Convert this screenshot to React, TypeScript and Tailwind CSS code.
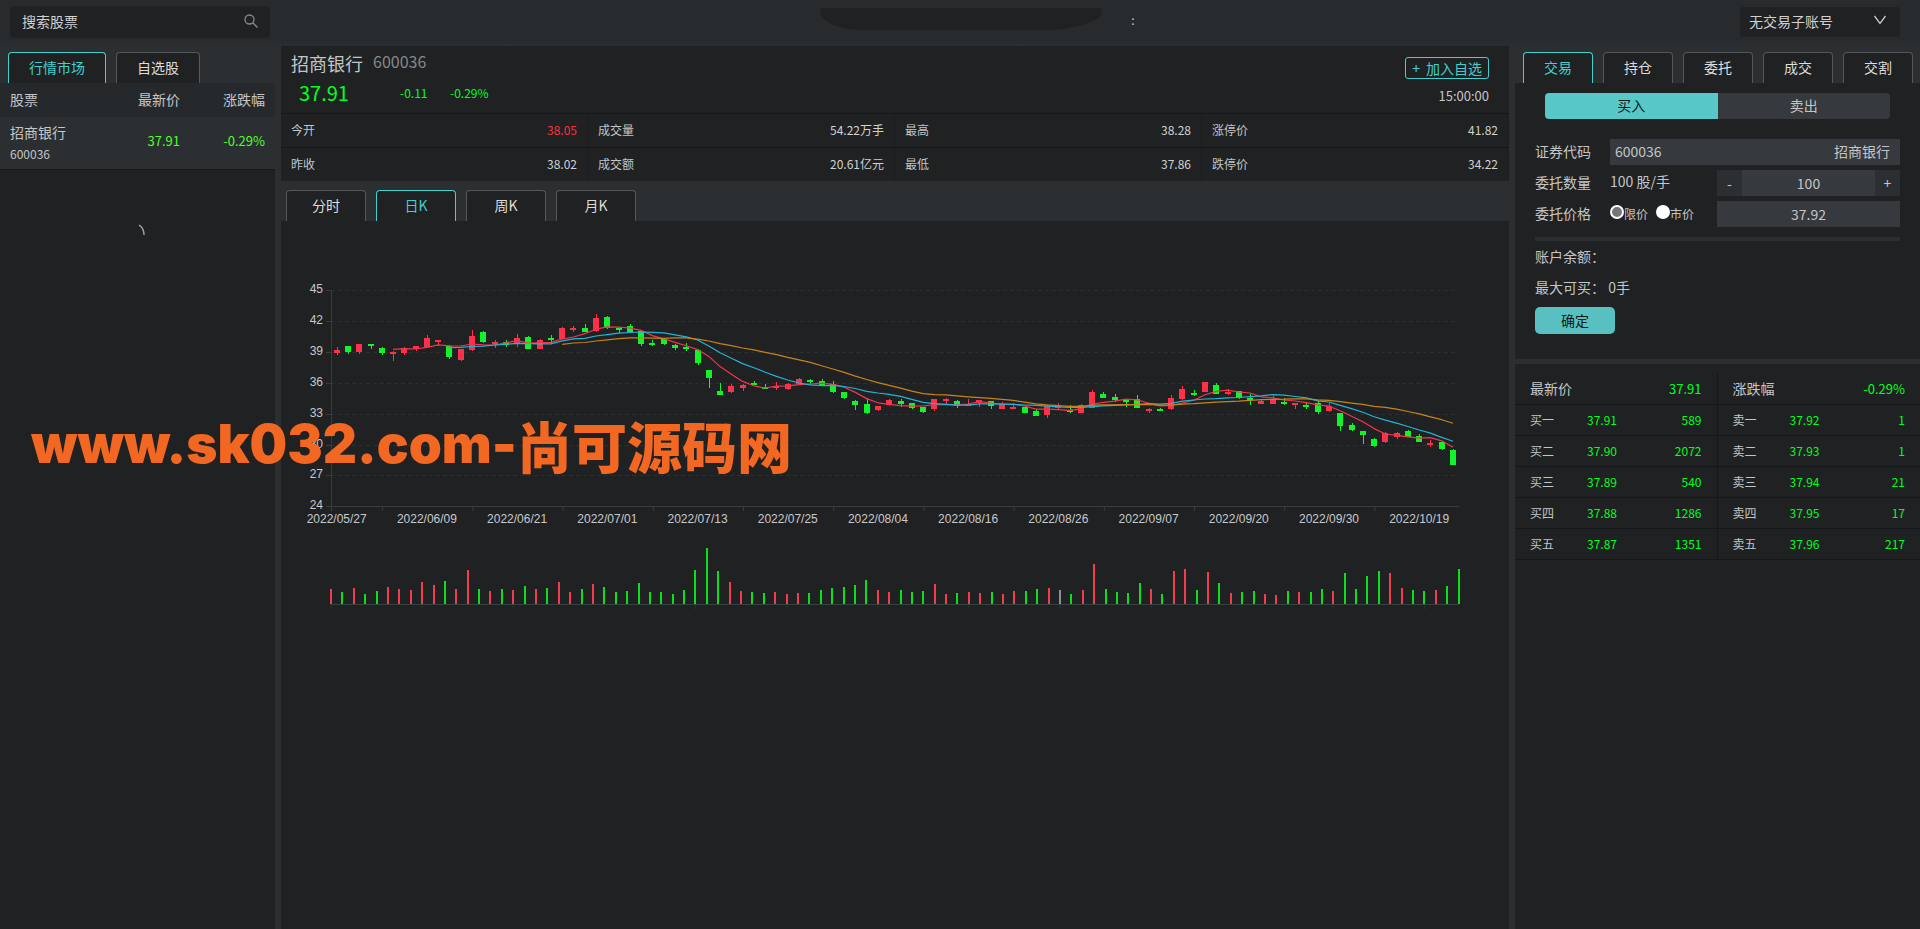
import { ReactNode, useState } from "react"
import clsx from "clsx"

type Candle = [up: number, high: number, top: number, bottom: number, low: number, volume: number]

// up flag, wick top, body top, body bottom, wick bottom, volume bar height
const candles: Candle[] = [
    [1, 87, 90, 93, 95, 15], [0, 86, 86, 92, 94, 12], [1, 84, 84, 92, 94, 16], [0, 84, 84, 86, 89, 10], [0, 87, 88, 93, 95, 13],
    [1, 91, 92, 94, 101, 17], [1, 87, 88, 93, 95, 15], [1, 86, 86, 89, 91, 14], [1, 75, 78, 87, 88, 22], [1, 80, 80, 82, 86, 19],
    [0, 85, 86, 97, 99, 23], [1, 89, 89, 100, 101, 15], [1, 70, 76, 90, 91, 34], [0, 71, 72, 82, 83, 15], [1, 80, 82, 84, 88, 13],
    [0, 80, 82, 85, 87, 15], [1, 74, 78, 84, 87, 14], [0, 76, 77, 89, 89, 18], [1, 79, 80, 89, 89, 15], [0, 75, 78, 80, 84, 16],
    [1, 67, 68, 79, 79, 22], [1, 66, 68, 70, 72, 12], [0, 64, 68, 72, 72, 15], [1, 54, 58, 71, 72, 20], [0, 56, 57, 68, 69, 17],
    [0, 67, 68, 70, 73, 12], [0, 64, 66, 72, 73, 13], [0, 71, 71, 84, 86, 21], [0, 80, 83, 84, 86, 12], [0, 79, 79, 84, 85, 12],
    [0, 84, 85, 88, 90, 10], [0, 83, 87, 89, 91, 14], [0, 89, 90, 103, 105, 34], [0, 110, 110, 118, 128, 56], [0, 123, 131, 135, 135, 33],
    [1, 124, 126, 132, 133, 22], [1, 124, 125, 128, 131, 13], [0, 121, 123, 125, 125, 12], [0, 124, 127, 129, 129, 11], [1, 122, 126, 127, 130, 12],
    [1, 123, 124, 129, 130, 10], [1, 118, 119, 124, 125, 11], [0, 119, 120, 122, 124, 11], [0, 119, 121, 125, 125, 14], [0, 121, 124, 132, 133, 16],
    [0, 132, 132, 138, 139, 17], [0, 140, 141, 145, 150, 19], [0, 138, 144, 153, 154, 24], [1, 146, 146, 150, 151, 14], [1, 139, 140, 145, 146, 12],
    [0, 139, 141, 144, 147, 14], [0, 143, 143, 148, 149, 12], [0, 147, 147, 152, 153, 13], [1, 139, 139, 149, 151, 20], [1, 138, 139, 141, 144, 10],
    [0, 140, 141, 146, 148, 11], [1, 139, 144, 145, 145, 12], [1, 140, 140, 143, 147, 11], [0, 141, 141, 146, 149, 12], [1, 142, 144, 149, 149, 10],
    [1, 143, 147, 148, 148, 13], [0, 147, 147, 153, 153, 13], [0, 149, 151, 156, 156, 15], [1, 145, 146, 155, 158, 16], [1, 143, 146, 147, 149, 14],
    [0, 145, 150, 151, 153, 10], [1, 144, 145, 153, 153, 14], [1, 130, 132, 148, 148, 40], [0, 132, 134, 138, 138, 15], [0, 134, 137, 140, 142, 12],
    [0, 139, 140, 141, 147, 11], [0, 135, 139, 148, 148, 21], [1, 148, 149, 150, 153, 15], [0, 148, 149, 151, 151, 10], [1, 135, 138, 149, 150, 33],
    [1, 126, 129, 139, 140, 35], [0, 130, 133, 134, 136, 14], [1, 122, 122, 132, 132, 32], [0, 123, 125, 134, 134, 21], [1, 129, 132, 133, 135, 11],
    [0, 131, 131, 138, 139, 12], [0, 134, 138, 139, 145, 13], [1, 140, 141, 144, 144, 10], [1, 136, 139, 144, 144, 9], [0, 138, 142, 143, 145, 13],
    [1, 143, 143, 144, 149, 12], [0, 143, 145, 147, 149, 12], [0, 140, 143, 152, 154, 15], [1, 143, 146, 151, 152, 13], [0, 153, 153, 166, 171, 31],
    [0, 163, 165, 170, 171, 15], [0, 171, 171, 175, 184, 28], [0, 178, 179, 186, 187, 33], [1, 172, 173, 182, 183, 31], [1, 172, 173, 177, 179, 16],
    [0, 170, 171, 177, 177, 14], [0, 174, 176, 182, 182, 13], [1, 180, 183, 185, 187, 14], [0, 181, 182, 189, 190, 18], [0, 189, 190, 205, 205, 35],
]

const UNCHANGED_VOLUME = 64

const dates = [
    "2022/05/27", "2022/06/09", "2022/06/21", "2022/07/01", "2022/07/13", "2022/07/25", "2022/08/04",
    "2022/08/16", "2022/08/26", "2022/09/07", "2022/09/20", "2022/09/30", "2022/10/19",
]

const stats = [
    ["今开", "38.05"], ["成交量", "54.22万手"], ["最高", "38.28"], ["涨停价", "41.82"],
    ["昨收", "38.02"], ["成交额", "20.61亿元"], ["最低", "37.86"], ["跌停价", "34.22"],
]

const bids = [["买一", "37.91", "589"], ["买二", "37.90", "2072"], ["买三", "37.89", "540"], ["买四", "37.88", "1286"], ["买五", "37.87", "1351"]]
const asks = [["卖一", "37.92", "1"], ["卖二", "37.93", "1"], ["卖三", "37.94", "21"], ["卖四", "37.95", "17"], ["卖五", "37.96", "217"]]

const candleX = (i: number) => 55.7 + i * 11.276
const volumeX = (i: number) => 50 + i * 11.39
const TOP = 39

function movingAverage(days: number) {
    const points: string[] = []
    for (let i = days; i < candles.length; i++) {
        const closes = candles.slice(i - days + 1, i + 1).map((c) => (c[0] ? c[2] : c[3]))
        const avg = closes.reduce((a, b) => a + b, 0) / days
        points.push(`${candleX(i).toFixed(1)},${(avg + TOP).toFixed(1)}`)
    }
    return points.join(" ")
}

function KLineChart() {
    return (
        <svg viewBox="0 0 1228 400" className="block w-full" fontFamily="'Liberation Sans', Arial, sans-serif" fontSize="12" fill="#c8c9ca">
            {/* Price axis */}
            {[45, 42, 39, 36, 33, 30, 27, 24].map((price, i) => {
                const y = Math.round(69.3 + i * 30.86) + 0.5
                return (
                    <g key={price}>
                        <line x1="45" x2="50" y1={y} y2={y} stroke="#393c3e" />
                        <line x1="50" x2="1178" y1={y} y2={y} stroke={price === 24 ? "#393c3e" : "#2c2f31"} strokeDasharray={price === 24 ? undefined : "4 3"} />
                        <text x="42" y={y + 2} textAnchor="end">{price}</text>
                    </g>
                )
            })}
            <line x1="50.5" x2="50.5" y1="69" y2="290" stroke="#393c3e" />

            {/* Dates */}
            {dates.map((date, i) => (
                <g key={date}>
                    {i < 12 && <line x1={101.7 + i * 90.2} x2={101.7 + i * 90.2} y1="286" y2="290" stroke="#393c3e" />}
                    <text x={candleX(i * 8)} y="302" textAnchor="middle">{date}</text>
                    <line x1={volumeX(i * 8)} x2={volumeX(i * 8)} y1="384" y2="388" stroke="#2b3530" />
                </g>
            ))}

            {candles.map(([up, high, top, bottom, low], i) => {
                const x = Math.round(candleX(i))
                return (
                    <g key={i} fill={up ? "#ff3049" : "#10f52a"} shapeRendering="crispEdges">
                        <rect x={x} y={high + TOP} width="1" height={low - high} />
                        <rect x={x - 3} y={top + TOP} width="6" height={Math.max(bottom - top, 2)} />
                    </g>
                )
            })}

            <g fill="none" strokeWidth="1.2" strokeLinejoin="round">
                <polyline points={movingAverage(5)} stroke="#f5344b" />
                <polyline points={movingAverage(10)} stroke="#22b4d6" />
                <polyline points={movingAverage(20)} stroke="#c9831a" />
            </g>

            {/* Volume */}
            <line x1="50" x2="1178" y1="383.5" y2="383.5" stroke="#35423b" />
            {candles.map(([up, , , , , volume], i) => (
                <rect
                    key={i}
                    x={Math.round(volumeX(i)) - 1}
                    y={383 - volume}
                    width="2"
                    height={volume}
                    fill={i === UNCHANGED_VOLUME ? "#8d9091" : up ? "#f23e4c" : "#0be01a"}
                />
            ))}
        </svg>
    )
}

function Tab({ active, className, onClick, children }: { active: boolean; className?: string; onClick: () => void; children: ReactNode }) {
    return (
        <button
            type="button"
            onClick={onClick}
            className={clsx(
                "h-[31px] rounded-t border border-b-0 bg-[#1f2123] pb-0.5 text-sm",
                active ? "border-[#45cfcd] text-[#45cfcd]" : "border-[#54585a] text-[#dcdddd]",
                className
            )}
        >
            {children}
        </button>
    )
}

function Depth({ title, value, rows }: { title: string; value: string; rows: string[][] }) {
    return (
        <table className="w-full table-fixed border-collapse text-xs text-[#00ff1e]">
            <thead>
                <tr className="h-[31px] border-b border-[#15181a]">
                    <th className="w-[72px] pl-[15px] text-left text-sm font-normal whitespace-nowrap text-[#c4c5c6]">{title}</th>
                    <td colSpan={2} className="pr-[15px] text-right text-[13px]">{value}</td>
                </tr>
            </thead>
            <tbody>
                {rows.map(([name, price, amount]) => (
                    <tr key={name} className="h-[31px] border-b border-[#15181a]">
                        <th className="pl-[15px] text-left font-normal text-[#c4c5c6]">{name}</th>
                        <td>{price}</td>
                        <td className="pr-[15px] text-right">{amount}</td>
                    </tr>
                ))}
            </tbody>
        </table>
    )
}

export default function App() {
    const [listTab, setListTab] = useState("行情市场")
    const [period, setPeriod] = useState("日K")
    const [tradeTab, setTradeTab] = useState("交易")
    const [amount, setAmount] = useState(100)

    return (
        <div className="relative flex min-h-screen flex-col overflow-hidden bg-[#2b2f32] font-['Noto_Sans_CJK_SC',sans-serif] text-sm text-[#c4c5c6]">
            <header className="flex h-[46px] items-start justify-between bg-linear-to-b from-[#272b2e] from-85% to-[#2b2f32] pr-5 pl-2.5">
                <label className="mt-1.5 flex h-8 w-[260px] items-center rounded bg-[#1f2123] px-3 pb-0.5">
                    <input aria-label="搜索股票" placeholder="搜索股票" className="min-w-0 flex-1 bg-transparent outline-none placeholder:text-[#d0d1d1]" />
                    <svg viewBox="0 0 14 14" className="h-3.5 w-3.5" fill="none" stroke="#85898b" strokeWidth="1.3">
                        <circle cx="5.5" cy="5.5" r="4.5" />
                        <path d="M8.8 8.8 13.5 13.5" />
                    </svg>
                </label>
                <div className="mt-2 mr-14 flex gap-7">
                    <svg viewBox="0 0 284 24" className="h-6 w-[284px]" fill="#1f2123">
                        <path d="M2 0H282Q286 8 274 13Q256 21 232 22H40Q18 21 8 13Q-2 6 2 0Z" />
                    </svg>
                    <span className="text-xs leading-6">:</span>
                </div>
                <div className="relative mt-[7px] w-40">
                    <select aria-label="交易子账号" className="h-[30px] w-full appearance-none rounded-sm bg-[#1f2123] pb-0.5 pl-[9px] text-[#d0d1d1] outline-none">
                        <option>无交易子账号</option>
                    </select>
                    <svg viewBox="0 0 14 10" className="pointer-events-none absolute top-2 right-[13px] h-2.5 w-3.5" fill="none" stroke="#c8c9ca" strokeWidth="1.3">
                        <path d="M1.5 1 7 8.5 12.5 1" />
                    </svg>
                </div>
            </header>

            <main className="flex flex-1 gap-1.5">
                {/* Stock list */}
                <aside className="flex w-[275px] shrink-0 flex-col">
                    <div className="flex gap-2.5 pt-1.5 pl-2">
                        <Tab active={listTab === "行情市场"} onClick={() => setListTab("行情市场")} className="w-[98px]">行情市场</Tab>
                        <Tab active={listTab === "自选股"} onClick={() => setListTab("自选股")} className="w-[84px]">自选股</Tab>
                    </div>
                    <table className="w-full table-fixed border-collapse">
                        <thead>
                            <tr className="h-[34px] bg-[#26292c]">
                                <th className="w-[100px] pb-0.5 pl-2.5 text-left font-normal">股票</th>
                                <th className="w-20 pb-0.5 text-right font-normal">最新价</th>
                                <th className="pr-2.5 pb-0.5 text-right font-normal">涨跌幅</th>
                            </tr>
                        </thead>
                        <tbody>
                            <tr className="h-[52px] border-b border-[#17191b] text-[13px] text-[#4cff24]">
                                <td className="pb-0.5 pl-2.5 text-[#c4c5c6]">
                                    <div className="text-sm leading-6">招商银行</div>
                                    <div className="text-xs leading-5">600036</div>
                                </td>
                                <td className="pb-0.5 text-right">37.91</td>
                                <td className="pr-2.5 pb-0.5 text-right">-0.29%</td>
                            </tr>
                        </tbody>
                    </table>
                    <div className="flex flex-1 justify-center bg-[#1f2123] pt-[54px] pl-2">
                        <svg viewBox="0 0 12 12" className="h-3 w-3" fill="none" stroke="#a5a7a8" strokeWidth="1.4">
                            <path d="M3 1Q8 4 8 11" />
                        </svg>
                    </div>
                </aside>

                {/* Quote and chart */}
                <section className="flex min-w-0 flex-1 flex-col">
                    <div className="bg-[#1f2123]">
                        <div className="flex h-[67px] justify-between pr-5 pl-2.5">
                            <div>
                                <h1 className="flex h-[35px] items-center gap-2.5 pb-0.5 text-lg">
                                    招商银行 <span className="pb-1 text-base text-[#85898b]">600036</span>
                                </h1>
                                <div className="flex items-center pl-2 text-xs leading-6 text-[#00ff1e]">
                                    <span className="w-[101px] text-xl leading-6">37.91</span>
                                    <span className="w-[50px]">-0.11</span>
                                    <span>-0.29%</span>
                                </div>
                            </div>
                            <div className="flex flex-col items-end pt-[11px]">
                                <button type="button" className="flex h-[22px] gap-1.5 rounded-[3px] border border-[#45cfcd] px-1.5 leading-5 text-[#45cfcd]">
                                    <span>+</span>
                                    <span>加入自选</span>
                                </button>
                                <time className="mt-[7px] text-[13px] leading-5">15:00:00</time>
                            </div>
                        </div>
                        <dl className="grid grid-cols-4 text-xs">
                            {stats.map(([name, value]) => (
                                <div key={name} className="flex h-[34px] items-center justify-between border-t border-r border-t-[#15181a] border-r-[#1b1d1f] px-2.5 pb-0.5">
                                    <dt>{name}</dt>
                                    <dd className={name === "今开" ? "text-[#ff2f3c]" : "text-[#d0d1d1]"}>{value}</dd>
                                </div>
                            ))}
                        </dl>
                    </div>
                    <div className="flex gap-2.5 pt-[9px] pl-[5px]">
                        {["分时", "日K", "周K", "月K"].map((name) => (
                            <Tab key={name} active={period === name} onClick={() => setPeriod(name)} className="w-20">{name}</Tab>
                        ))}
                    </div>
                    <div className="flex-1 bg-[#1f2123]">
                        <KLineChart />
                    </div>
                </section>

                {/* Trade panel */}
                <aside className="flex w-[405px] shrink-0 flex-col">
                    <div className="flex gap-2.5 pt-1.5 pl-2">
                        {["交易", "持仓", "委托", "成交", "交割"].map((name) => (
                            <Tab key={name} active={tradeTab === name} onClick={() => setTradeTab(name)} className="w-[70px]">{name}</Tab>
                        ))}
                    </div>
                    <form className="bg-[#1f2123] px-5 pt-2.5 pb-[25px]" onSubmit={(e) => e.preventDefault()}>
                        <div className="mx-2.5 flex h-[26px] overflow-hidden rounded">
                            <button type="button" className="flex-1 bg-[#58c7c7] pb-0.5 text-[#14191b]">买入</button>
                            <button type="button" className="flex-1 bg-[#363a3f] pb-0.5">卖出</button>
                        </div>
                        <div className="mt-5 grid grid-cols-[75px_107px_minmax(0,1fr)] items-center gap-y-[5px]">
                            <label htmlFor="code" className="pb-0.5">证券代码</label>
                            <div className="col-span-2 flex h-[26px] items-center bg-[#363a3f] pr-2.5 pb-0.5 pl-[5px]">
                                <input id="code" defaultValue="600036" className="min-w-0 flex-1 bg-transparent outline-none" />
                                <span>招商银行</span>
                            </div>
                            <label htmlFor="amount" className="pb-0.5">委托数量</label>
                            <span className="pb-1">100 股/手</span>
                            <div className="flex h-[26px] bg-[#2b2f32]">
                                <button type="button" aria-label="减少" className="w-[25px]" onClick={() => setAmount(amount - 100)}>-</button>
                                <input id="amount" value={amount} onChange={(e) => setAmount(Number(e.target.value))} className="min-w-0 flex-1 bg-[#363a3f] text-center outline-none" />
                                <button type="button" aria-label="增加" className="w-[25px]" onClick={() => setAmount(amount + 100)}>+</button>
                            </div>
                            <label htmlFor="price" className="pb-0.5">委托价格</label>
                            <div className="flex gap-2 text-xs">
                                <label className="flex items-center">
                                    <input type="radio" name="kind" defaultChecked className="mb-1 h-3.5 w-3.5 appearance-none rounded-full border-2 border-white bg-white checked:bg-[#767676]" />
                                    限价
                                </label>
                                <label className="flex items-center">
                                    <input type="radio" name="kind" className="mb-1 h-3.5 w-3.5 appearance-none rounded-full border-2 border-white bg-white checked:bg-[#767676]" />
                                    市价
                                </label>
                            </div>
                            <input id="price" defaultValue="37.92" className="h-[26px] w-full bg-[#363a3f] text-center outline-none" />
                        </div>
                        <div className="mt-2.5 h-1 bg-[#2b2f32]" />
                        <p className="pb-px leading-[30px]">账户余额：</p>
                        <p className="pb-px leading-[30px]">最大可买： 0手</p>
                        <button type="submit" className="mt-1 h-[27px] w-20 rounded-[5px] bg-[#58c0c0] pb-0.5 text-[#14191b]">确定</button>
                    </form>
                    <div className="mt-[5px] grid flex-1 grid-cols-2 items-start bg-[#1f2123] pt-[9px]">
                        <div className="border-r border-[#15181a]">
                            <Depth title="最新价" value="37.91" rows={bids} />
                        </div>
                        <Depth title="涨跌幅" value="-0.29%" rows={asks} />
                    </div>
                </aside>
            </main>

            <div className="pointer-events-none absolute top-[412px] left-[31px] flex items-center font-['Inter',sans-serif] text-[53px] leading-[64px] font-black whitespace-nowrap text-[#f26722]">
                www.sk032.com-
                <span className="font-['Noto_Sans_CJK_SC',sans-serif] text-[55px]">尚可源码网</span>
            </div>
        </div>
    )
}
